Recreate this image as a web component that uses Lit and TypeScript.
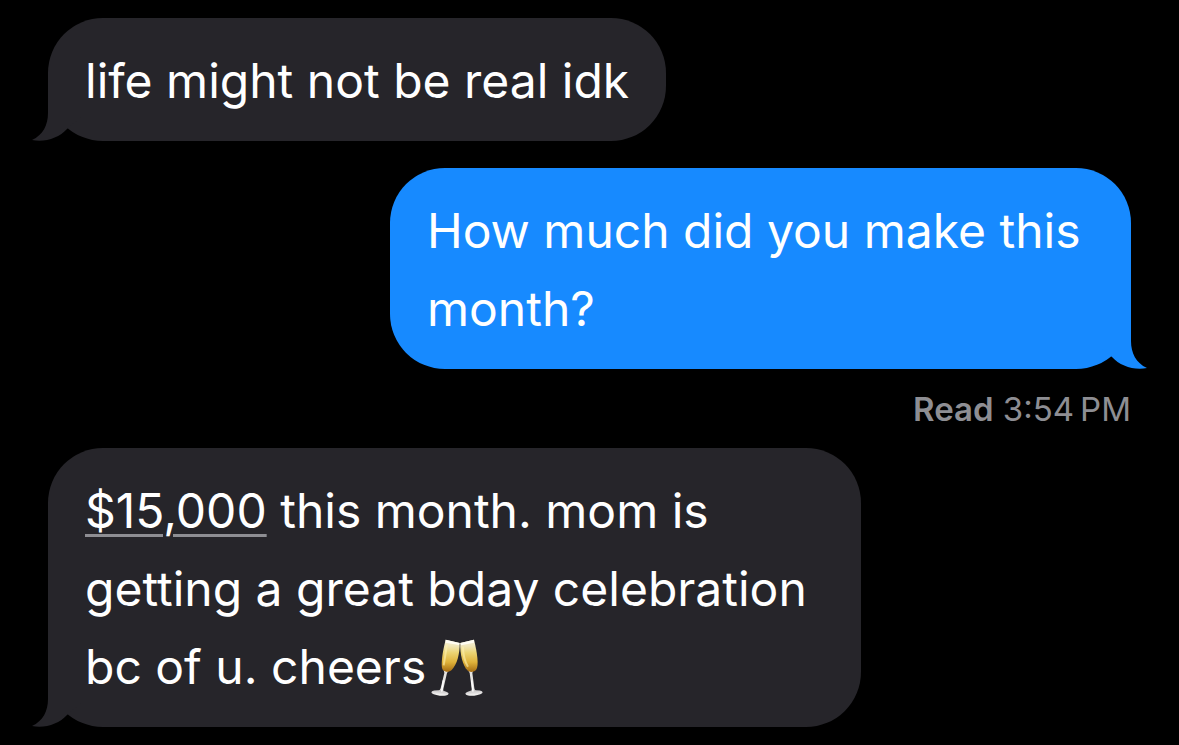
import { LitElement, html, css } from "lit";
import { customElement, property } from "lit/decorators.js";

@customElement("message-bubble")
class MessageBubble extends LitElement {
  @property({ type: Boolean, reflect: true }) sent = false;

  static styles = css`
    :host {
      display: flex;
      --fill: #26252a;
      --widest: 813px;
    }
    :host([sent]) {
      justify-content: flex-end;
      --fill: #178aff;
      --widest: 741px;
    }
    .bubble {
      position: relative;
      box-sizing: border-box;
      max-width: min(100%, var(--widest));
      padding: 24px 37px 21px;
      border-radius: 55px;
      background: var(--fill);
    }
    .tail {
      position: absolute;
      left: -16px;
      bottom: 0;
      width: 56px;
      height: 60px;
      fill: var(--fill);
    }
    :host([sent]) .tail {
      left: auto;
      right: -16px;
      transform: scaleX(-1);
    }
  `;

  render() {
    return html`<div class="bubble">
      <svg class="tail" viewBox="0 0 56 60" aria-hidden="true">
        <path d="M16 0V32C16 44 11 54 0 59C13 61.500 27 57 35 48L56 30V0Z" />
      </svg>
      <slot></slot>
    </div>`;
  }
}

@customElement("clinking-glasses")
class ClinkingGlasses extends LitElement {
  static styles = css`
    :host { display: inline-block; }
    svg {
      display: inline-block;
      width: 52px;
      height: 58px;
      margin-left: 5px;
      vertical-align: -13px;
    }
  `;

  render() {
    return html`<svg viewBox="32 26 156 174" role="img" aria-label="Clinking glasses">
      <defs>
        <linearGradient id="wine" x1="0" y1="0" x2="0" y2="1">
          <stop offset="0" stop-color="#f8f3e2" />
          <stop offset=".2" stop-color="#f0e6b8" />
          <stop offset=".4" stop-color="#ecd575" />
          <stop offset=".7" stop-color="#dfb23a" />
          <stop offset="1" stop-color="#a56c12" />
        </linearGradient>
        <linearGradient id="foot" x1="0" y1="0" x2="0" y2="1">
          <stop offset="0" stop-color="#c4c2c4" />
          <stop offset="1" stop-color="#fbfaf8" />
        </linearGradient>
      </defs>
      <path d="M70 119L72 128L61 174C59 181 52 183 46 187L72 190C69 186 68 182 69 176L80 128L85 121Z" fill="#e5e3e0" />
      <ellipse cx="59" cy="188" rx="26" ry="8" transform="rotate(5 59 188)" fill="url(#foot)" />
      <path d="M64 184L69 150" stroke="#fff" stroke-width="4" />
      <path d="M76 28L118 38C119 68 110 104 94 119C87 126 75 126 68 119C60 108 67 62 76 28Z" fill="url(#wine)" />
      <path d="M80 42L75 74L70 105" fill="none" stroke="#fff1ae" stroke-width="6" opacity=".6" />
      <path d="M76 28L118 38L116 44L76 37Z" fill="#fffdf2" />
      <path d="M143 119L148 128L154 174C155 181 151 186 148 190L174 187C168 183 163 181 162 174L156 128L159 120Z" fill="#e5e3e0" />
      <ellipse cx="161" cy="188" rx="26" ry="8" transform="rotate(-5 161 188)" fill="url(#foot)" />
      <path d="M158 184L154 150" stroke="#fff" stroke-width="4" />
      <path d="M120 38L161 28C170 64 177 106 167 119C160 126 148 127 141 120C127 106 118 68 120 38Z" fill="url(#wine)" />
      <path d="M128 49C128 70 135 96 143 109" fill="none" stroke="#fff1ae" stroke-width="6" opacity=".6" />
      <path d="M120 38L161 28L161 37L122 45Z" fill="#fffdf2" />
    </svg>`;
  }
}

@customElement("app-root")
class AppRoot extends LitElement {
  static styles = css`
    :host {
      display: block;
      box-sizing: border-box;
      min-height: 100vh;
      padding: 18px 48px;
      background: #000;
      color: #fff;
      font: 48px/78px Inter, sans-serif;
    }
    .thread {
      display: flex;
      flex-direction: column;
    }
    .reply { margin-top: 27px; }
    .receipt {
      padding-top: 2px;
      color: #8e8e93;
      font-size: 33px;
      line-height: 77px;
      text-align: right;
    }
    .receipt strong { font-weight: 600; }
    .amount {
      color: inherit;
      text-decoration: underline;
      text-decoration-color: #8e8e93;
      text-decoration-thickness: 3px;
      text-underline-offset: 6px;
    }
    clinking-glasses { line-height: 58px; }
  `;

  render() {
    return html`<main class="thread">
      <message-bubble>life might not be real idk</message-bubble>
      <message-bubble class="reply" sent>How much did you make this month?</message-bubble>
      <div class="receipt"><strong>Read</strong> <time datetime="15:54">3:54&#8201;PM</time></div>
      <message-bubble><a class="amount" href="#amount">$15,000</a> this month. mom is getting a great bday celebration bc of u. cheers<clinking-glasses></clinking-glasses></message-bubble>
    </main>`;
  }
}
